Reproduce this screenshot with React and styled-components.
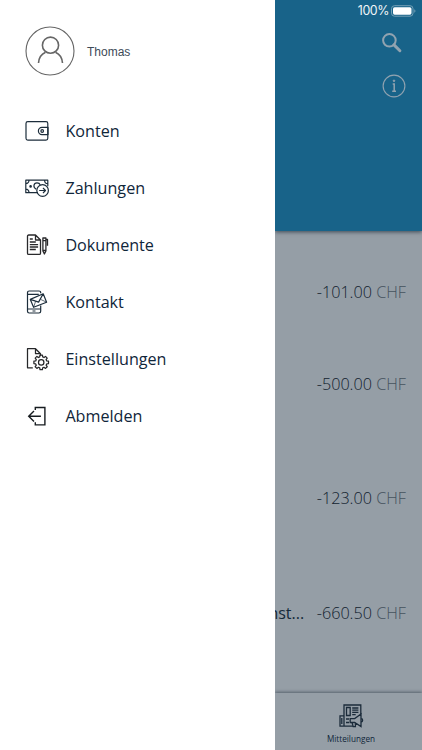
import React from "react";
import styled, { createGlobalStyle } from "styled-components";

const Global = createGlobalStyle`
  * { box-sizing: border-box; }
  body { margin: 0; overflow: hidden; font-family: "Open Sans", sans-serif; color: #10263a; }
`;

const Screen = styled.div`
  display: grid;
  grid-template-columns: 275px 147px;
  width: 422px;
  height: 750px;
  overflow: hidden;
  background: #959ea6;
`;

const Drawer = styled.nav`
  background: #fff;
`;

const Profile = styled.div`
  display: flex;
  align-items: center;
  gap: 12px;
  height: 102px;
  padding-left: 25px;
`;

const Avatar = styled.svg`
  width: 50px;
  height: 50px;
  fill: none;
  stroke: #666;
`;

const UserName = styled.span`
  font: 400 12px/16px "Liberation Sans", sans-serif;
  letter-spacing: 0;
  padding-top: 1px;
  color: #3d4a57;
`;

const MenuItem = styled.div`
  display: flex;
  align-items: center;
  gap: 15.4px;
  height: 57px;
  padding-left: 25px;
  font-size: 16.15px;
  line-height: 24px;
`;

const MenuIcon = styled.svg`
  width: 25px;
  height: 26px;
  flex: none;
  fill: none;
  stroke: ${(p) => p.$color || "#1c2d3b"};
  stroke-width: ${(p) => p.$weight || 1.2};
  stroke-linejoin: round;
`;

const Account = styled.main`
  display: flex;
  flex-direction: column;
  min-width: 0;
  overflow: hidden;
`;

const Header = styled.header`
  display: flex;
  flex-direction: column;
  align-items: flex-end;
  flex: none;
  height: 231px;
  background: #186389;
  box-shadow: 0 1px 4px rgba(30, 45, 58, 0.75);
  z-index: 1;
`;

const StatusBar = styled.div`
  display: flex;
  align-items: center;
  gap: 2px;
  height: 21px;
  padding-right: 6px;
  font: 400 12.4px/16px Inter, sans-serif;
  letter-spacing: -0.4px;
  color: #f0f5f8;
`;

const BatteryIcon = styled.svg`
  width: 25px;
  height: 12px;
`;

const HeaderIcon = styled.svg`
  width: 24px;
  height: 24px;
  margin: ${(p) => p.$margin};
  fill: none;
  stroke: #91a3b0;
`;

const Bookings = styled.div`
  flex: 1;
`;

const Booking = styled.div`
  display: flex;
  align-items: center;
  justify-content: flex-end;
  height: ${(p) => p.$height}px;
  padding-right: 16px;
  font-size: 16px;
  white-space: nowrap;
`;

const Title = styled.span`
  margin-right: 12.5px;
  color: #14293a;
`;

const Amount = styled.span`
  font-weight: 300;
  font-size: 16.2px;
  color: #12222f;
`;

const Currency = styled.span`
  color: #46535e;
`;

const TabBar = styled.footer`
  display: flex;
  flex-direction: column;
  align-items: center;
  flex: none;
  height: 57px;
  padding: 10px 0 0 5px;
  background: #959ea6;
  box-shadow: 0 -1px 3px rgba(40, 55, 68, 0.6);
`;

const TabIcon = styled.svg`
  width: 26px;
  height: 26px;
  fill: none;
  stroke: #1b2b3a;
  stroke-width: 1.3;
`;

const TabLabel = styled.span`
  margin-top: 4px;
  font-size: 8.2px;
  line-height: 12px;
`;

const Wallet = () => (
  <MenuIcon viewBox="0 0 25 26">
    <rect x="1" y="3.7" width="21.8" height="18.4" rx="1.8" />
    <path d="M23 9.4h-6a3.6 3.6 0 0 0 0 7.2h6z" />
    <circle cx="17.2" cy="13" r="1.3" />
  </MenuIcon>
);

const Cash = () => (
  <MenuIcon viewBox="0 0 25 26">
    <path d="M13 17.7H.8V5.2h22v6M.8 8.7c2 0 3.2-1.5 3.2-3.5M.8 14.2c2 0 3.2 1.5 3.2 3.5M22.8 8.7c-2 0-3.2-1.5-3.2-3.5" />
    <path d="M11.2 14.2C7.7 12.6 8.5 7.9 12 7.9c1.6 0 2.8.8 3.2 2" />
    <circle cx="5.6" cy="11.4" r=".7" fill="#1c2d3b" />
    <circle cx="17.6" cy="15.5" r="5.8" />
    <path d="M14.2 15.5h6.3M18 13l2.5 2.5L18 18" />
  </MenuIcon>
);

const Documents = () => (
  <MenuIcon viewBox="0 0 25 26" $color="#29292b" $weight="1.3">
    <path d="M10.5 3H3.7c-.8 0-1.2.5-1.2 1.2v17c0 .8.5 1.2 1.2 1.2h10.6c.8 0 1.2-.4 1.2-1.2V8zv5h5M4.8 7h3M4.8 10h6M4.8 12.6h8.3M4.8 15h8.3M4.8 17.5h6" />
    <path d="M17.9 6h3v13l-1.5 3-1.5-3zM17.9 8.7h3M21 7.5h1.5v6.3M17.9 18.5h3" />
  </MenuIcon>
);

const Contact = () => (
  <MenuIcon viewBox="0 0 25 26">
    <path d="M15.7 4.2v-.5c0-1-.6-1.7-1.7-1.7H4.2c-1 0-1.7.6-1.7 1.7v18.6c0 1 .6 1.7 1.7 1.7H14c1 0 1.7-.6 1.7-1.7v-5.8M2.5 5.4h11.3M2.5 20h13.2M7.5 22h3" />
    <path d="M5.3 10.4l12.9-5.6 3.4 8.4-13 5.1zM5.3 10.4l8.3 2.7 4.6-8.3" />
    <path d="M8.6 18.3l2-6M21.6 13.2l-6-2.8" strokeWidth=".7" />
  </MenuIcon>
);

const Settings = () => (
  <MenuIcon viewBox="0 0 25 26" $color="#262729" $weight="1.25">
    <path d="M7.8 21.8H2.5V2.7h8l5 5v2M10.5 2.7v5h5" />
    <path
      transform="translate(-.4 -.5)"
      d="M15.1 11.4l.3-1.8h2.4l.3 1.8 1.3.6 1.5-1.1 1.7 1.7-1.1 1.5.6 1.3 1.8.3v2.4l-1.8.3-.6 1.3 1.1 1.5-1.7 1.7-1.5-1.1-1.3.6-.3 1.8h-2.4l-.3-1.8-1.3-.6-1.5 1.1-1.7-1.7 1.1-1.5-.6-1.3-1.8-.3v-2.4l1.8-.3.6-1.3-1.1-1.5 1.7-1.7 1.5 1.1z"
    />
    <circle cx="16.2" cy="16.4" r="2.7" />
  </MenuIcon>
);

const Logout = () => (
  <MenuIcon viewBox="0 0 25 26" $color="#171c20" $weight="1.4">
    <path d="M10.3 7V4.5h9.6v17.4h-9.6v-2.6M15.9 13.2H3.7M9 8l-5.3 5.2L9 18.4" strokeLinejoin="miter" />
  </MenuIcon>
);

const menu = [
  ["Konten", Wallet],
  ["Zahlungen", Cash],
  ["Dokumente", Documents],
  ["Kontakt", Contact],
  ["Einstellungen", Settings],
  ["Abmelden", Logout],
];

const bookings = [
  { amount: "-101.00", height: 121 },
  { amount: "-500.00", height: 63 },
  { amount: "-123.00", height: 166 },
  { amount: "-660.50", height: 63, title: "Dienst..." },
];

export default function App() {
  return (
    <>
      <Global />
      <Screen>
        <Drawer>
          <Profile>
            <Avatar viewBox="0 0 50 50">
              <circle cx="25" cy="25" r="24" strokeWidth="1.1" />
              <circle cx="25.5" cy="19.2" r="8.1" strokeWidth="1.6" />
              <path d="M13.5 37c.3-5 3-9 7-10.8M37.5 37c-.3-5-3-9-7-10.8" strokeWidth="1.6" />
            </Avatar>
            <UserName>Thomas</UserName>
          </Profile>
          {menu.map(([label, Icon]) => (
            <MenuItem key={label}>
              <Icon />
              <span>{label}</span>
            </MenuItem>
          ))}
        </Drawer>
        <Account>
          <Header>
            <StatusBar>
              <span>100%</span>
              <BatteryIcon viewBox="0 0 25 12">
                <rect x=".5" y=".7" width="21.5" height="10.5" rx="3" fill="none" stroke="#75a1b7" />
                <rect x="2" y="2.2" width="18.5" height="7.5" rx="1.6" fill="#fff" />
                <path d="M23.3 4.2v3.5c1.5-.6 1.5-2.9 0-3.5z" fill="#75a1b7" />
              </BatteryIcon>
            </StatusBar>
            <HeaderIcon viewBox="0 0 24 24" $margin="10px 18.5px 0 0">
              <circle cx="9.4" cy="9.3" r="6.3" strokeWidth="2" />
              <path d="M14 13.9l5.9 5.8" strokeWidth="3" strokeLinecap="round" />
            </HeaderIcon>
            <HeaderIcon viewBox="0 0 24 24" $margin="19px 16px 0 0">
              <circle cx="12" cy="12" r="10.9" strokeWidth="1.1" />
              <path d="M10.7 9.9h1.5v7.2M10.2 17.2h3.8" strokeWidth="1.5" />
              <circle cx="12" cy="6.8" r=".8" fill="#91a3b0" />
            </HeaderIcon>
          </Header>
          <Bookings>
            {bookings.map((b) => (
              <Booking key={b.amount} $height={b.height}>
                {b.title && <Title>{b.title}</Title>}
                <Amount>
                  {b.amount} <Currency>CHF</Currency>
                </Amount>
              </Booking>
            ))}
          </Bookings>
          <TabBar>
            <TabIcon viewBox="0 0 26 26">
              <path d="M6 23.2V2h16.8v9M6 12.8H2v10.4h16M3.8 15v6" />
              <path d="M8.5 4.5h3.7v8H8.5zM14.2 5h6.2M14.2 7.2h6.2M14.2 9.4h6.2M14.2 11.6h3.5M8 16h3M8 19.5h3" />
              <path d="M12.2 15.6h4.5l6.3-4.6v12.6l-6.3-4.1h-4.5zM14 19.5l1.2 4.2h2.2v-4.2M23 15.3c2.2.2 2.2 3.6 0 3.8" fill="#959ea6" />
            </TabIcon>
            <TabLabel>Mitteilungen</TabLabel>
          </TabBar>
        </Account>
      </Screen>
    </>
  );
}
